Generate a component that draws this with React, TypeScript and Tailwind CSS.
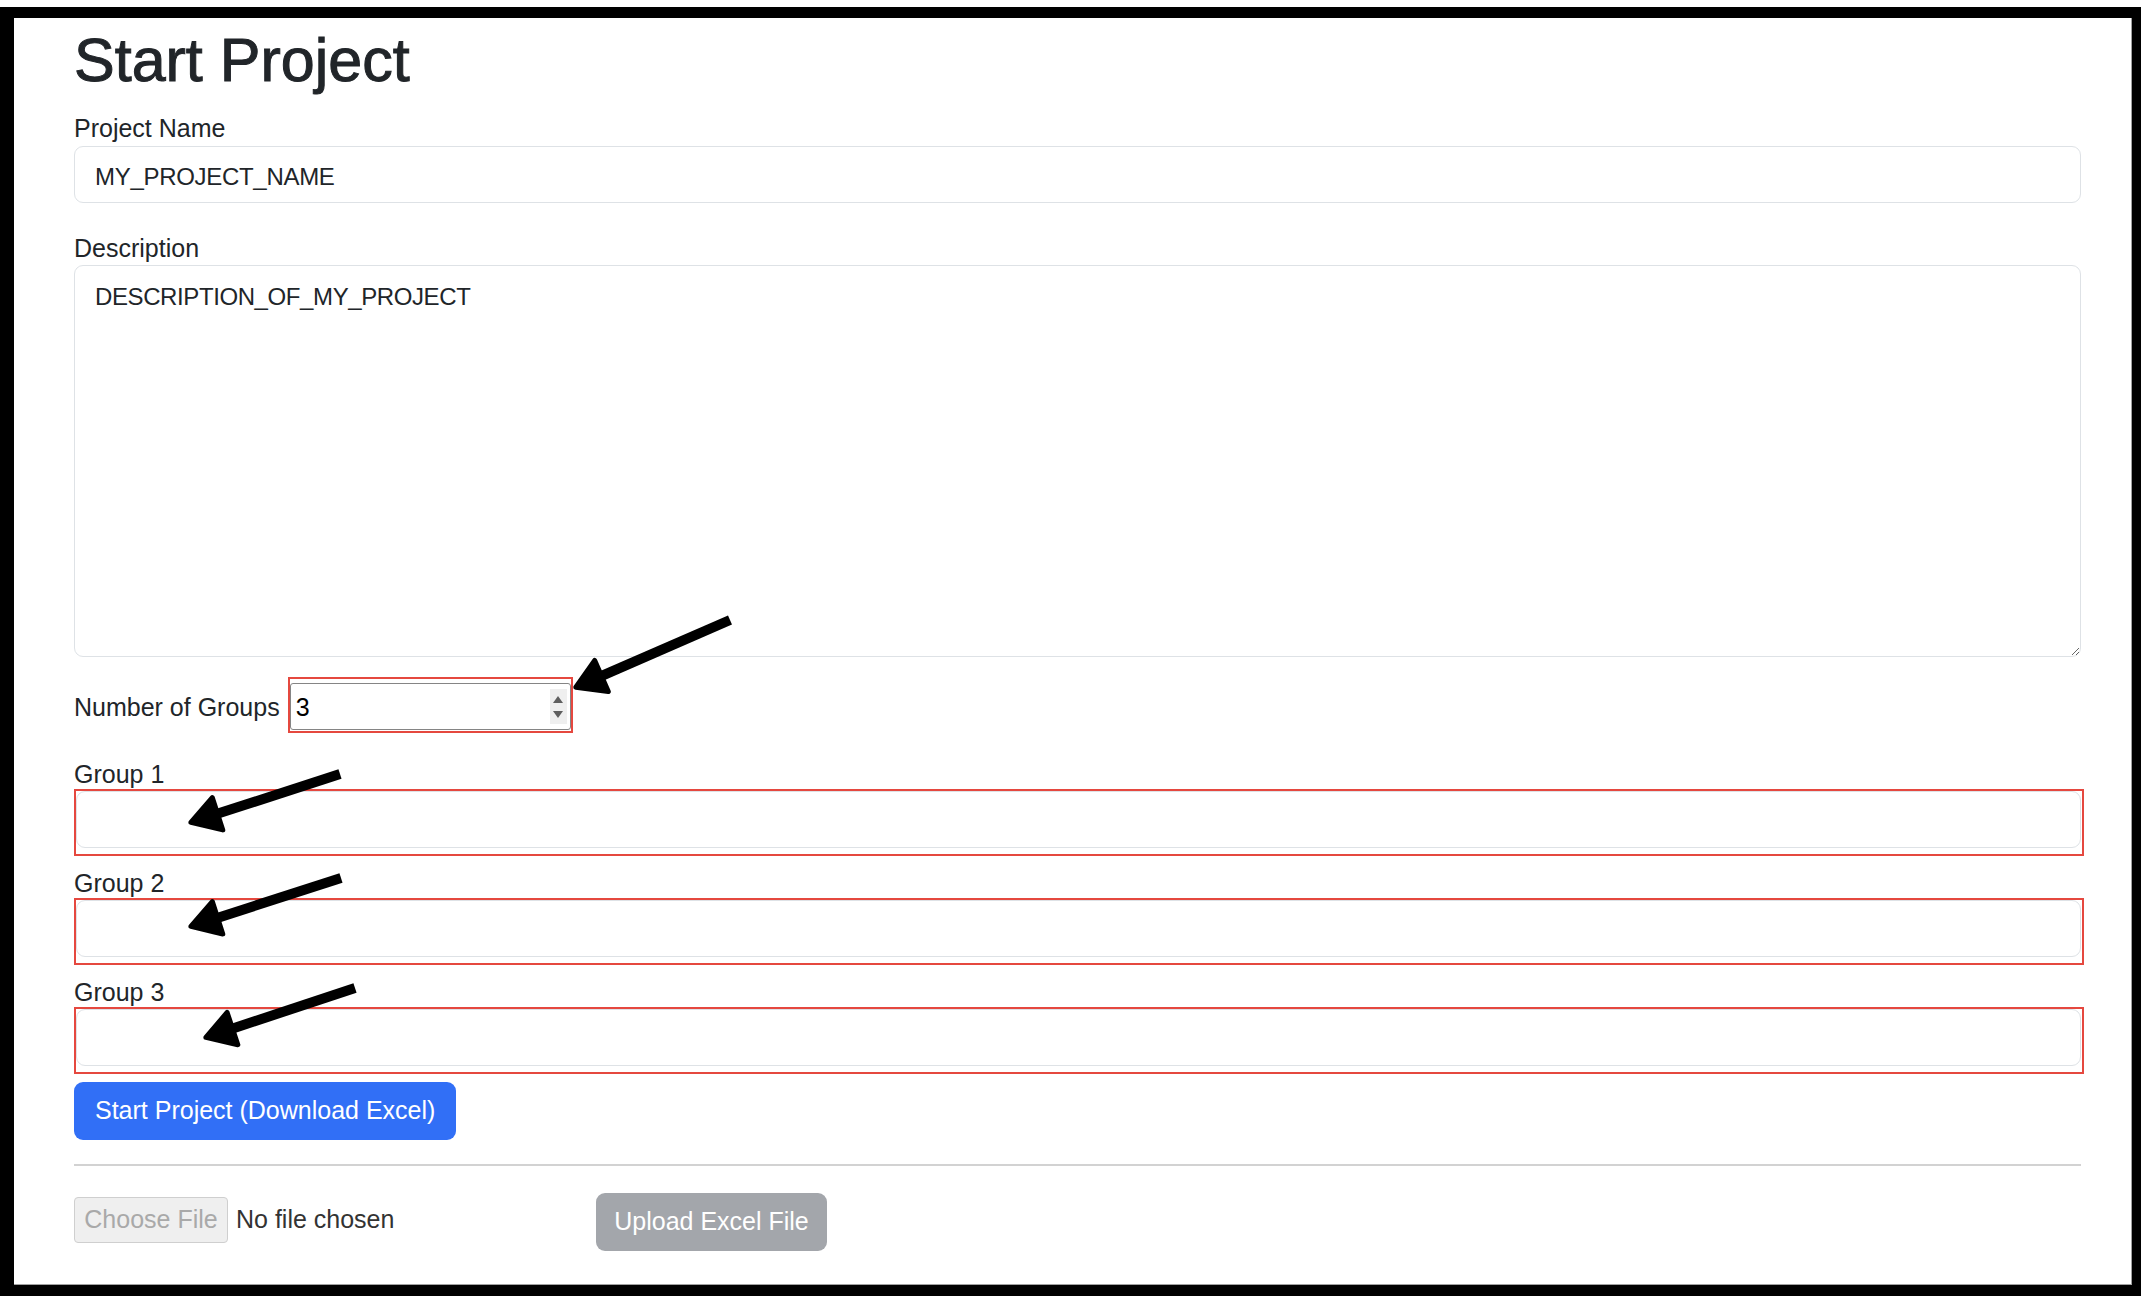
import React from 'react';

// ─── Annotation arrows (page coordinates) ─────────────────────────────────────
const ARROWS = [
  { x1: 730, y1: 620, x2: 574, y2: 688 },
  { x1: 340, y1: 774, x2: 189, y2: 823 },
  { x1: 341, y1: 878, x2: 189, y2: 927 },
  { x1: 355, y1: 988, x2: 204, y2: 1038 },
];

function Arrow({ x1, y1, x2, y2 }: { x1: number; y1: number; x2: number; y2: number }) {
  const dx = x2 - x1;
  const dy = y2 - y1;
  const len = Math.hypot(dx, dy);
  const ux = dx / len;
  const uy = dy / len;
  const nx = -uy;
  const ny = ux;
  const L = 30;
  const W = 34;
  const bx = x2 - ux * L;
  const by = y2 - uy * L;
  const pts = `${x2 - ux * 2},${y2 - uy * 2} ${bx + (nx * W) / 2},${by + (ny * W) / 2} ${bx - (nx * W) / 2},${by - (ny * W) / 2}`;
  return (
    <g>
      <line x1={x1} y1={y1} x2={bx + ux * 6} y2={by + uy * 6} stroke="#000" strokeWidth={10} />
      <polygon points={pts} fill="#000" stroke="#000" strokeWidth={5} strokeLinejoin="round" />
    </g>
  );
}

const Spinner = () => (
  <div className="flex flex-col items-center justify-center gap-[8px] w-[17px] h-[35px] bg-[#efefef] mr-[3px]">
    <svg width="10" height="7" viewBox="0 0 10 7"><path d="M5 0L10 7H0z" fill="#5f5f5f" /></svg>
    <svg width="10" height="7" viewBox="0 0 10 7"><path d="M0 0h10L5 7z" fill="#5f5f5f" /></svg>
  </div>
);

function GroupField({ n, first }: { n: number; first?: boolean }) {
  return (
    <div className={first ? 'flex flex-col' : 'flex flex-col mt-[9px]'}>
      <label className="leading-[36px] text-[25px] text-[#212529]">Group {n}</label>
      <div className="-mt-[3px] w-[2010px] h-[67px] border-2 border-[#e5483f]">
        <input
          type="text"
          className="block w-[2005px] h-[57px] border border-[#dee2e6] rounded-[9px] bg-white outline-none"
        />
      </div>
    </div>
  );
}

export default function App() {
  return (
    <div className="relative w-[2150px] h-[1300px] bg-white font-['Liberation_Sans',Arial,sans-serif] text-[#212529] overflow-hidden">
      <div className="mt-[7px] w-[2141px] h-[1289px] border-l-[14px] border-t-[11px] border-r-[9px] border-b-[11px] border-black bg-white">
        <div className="h-full border-r border-b border-[#a0a0a0] pl-[60px] pt-[6px]">
          <div className="flex flex-col w-[2007px]">

            {/* ── Title ── */}
            <h1 className="text-[61px] leading-[77px] -mt-[2px] [-webkit-text-stroke:1px_#212529] text-[#212529]">Start Project</h1>

            {/* ── Project name ── */}
            <label className="mt-[11px] text-[25px] leading-[36px]">Project Name</label>
            <input
              type="text"
              defaultValue="MY_PROJECT_NAME"
              className="h-[57px] w-full border border-[#dee2e6] rounded-[9px] px-[20px] pt-[4px] text-[24px] tracking-[-0.3px] text-[#212529] bg-white outline-none"
            />

            {/* ── Description ── */}
            <label className="mt-[27px] text-[25px] leading-[36px] h-[36px]">Description</label>
            <textarea
              defaultValue="DESCRIPTION_OF_MY_PROJECT"
              className="-mt-px h-[392px] w-full border border-[#dee2e6] rounded-[9px] px-[20px] pt-[13px] text-[24px] tracking-[-0.4px] leading-[36px] text-[#212529] bg-white outline-none font-['Liberation_Sans',Arial,sans-serif]"
            />

            {/* ── Number of groups ── */}
            <div className="mt-[20px] flex items-center h-[56px]">
              <label className="text-[25px] leading-[36px] mr-[8px] mt-[4px]">Number of Groups</label>
              <div className="w-[285px] h-[56px] border-2 border-[#e5483f] pt-[4px]">
                <div className="flex items-center justify-between h-[47px] w-full border border-[#858585] rounded-[3px] bg-white pl-[5px]">
                  <span className="text-[25px] text-black pt-[2px]">3</span>
                  <Spinner />
                </div>
              </div>
            </div>

            {/* ── Groups ── */}
            <div className="mt-[23px] flex flex-col">
              <GroupField n={1} first />
              <GroupField n={2} />
              <GroupField n={3} />
            </div>

            {/* ── Start button ── */}
            <button className="mt-[8px] w-fit h-[58px] px-[21px] rounded-[9px] bg-[#316ff6] text-white text-[25px]">
              Start Project (Download Excel)
            </button>

            <div className="mt-[24px] border-t-2 border-[#d2d2d2]" />

            {/* ── Upload row ── */}
            <div className="mt-[27px] flex items-center h-[58px]">
              <div className="flex items-center w-[522px] -mt-[5px]">
                <span className="flex items-center justify-center w-[154px] h-[46px] bg-[#efefef] border border-[#cfcfcf] rounded-[4px] text-[25px] text-[#a9a9a9]">
                  Choose File
                </span>
                <span className="ml-[8px] text-[25px] text-[#333]">No file chosen</span>
              </div>
              <button className="w-[231px] h-[58px] rounded-[9px] bg-[#a3a6ab] text-white text-[25px]">
                Upload Excel File
              </button>
            </div>
          </div>
        </div>
      </div>

      {/* ── Annotation arrows ── */}
      <svg className="absolute top-0 left-0 pointer-events-none" width="2150" height="1300" viewBox="0 0 2150 1300">
        {ARROWS.map((a, i) => (
          <Arrow key={i} {...a} />
        ))}
      </svg>
    </div>
  );
}
